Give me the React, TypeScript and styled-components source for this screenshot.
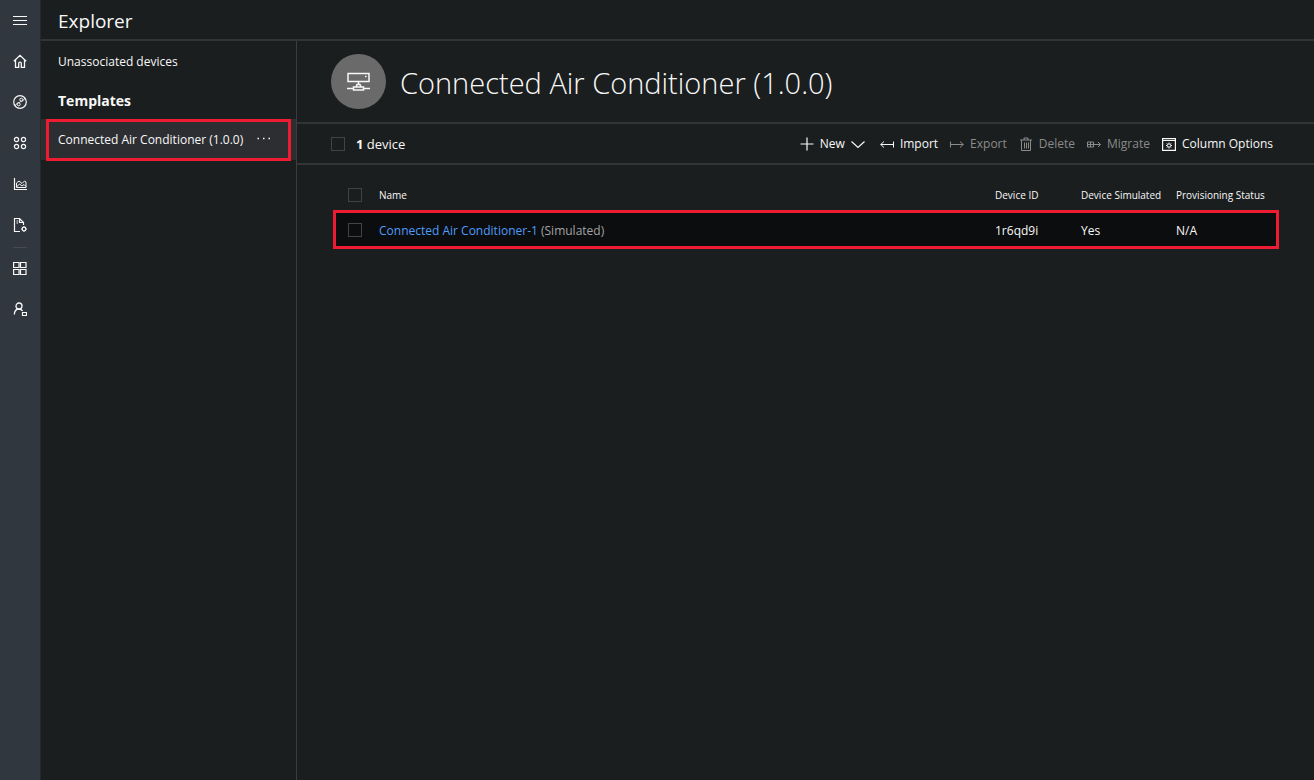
import React from "react";
import styled, { createGlobalStyle, css } from "styled-components";

const color = {
  page: "#1b1e1f",
  rail: "#31373f",
  railEdge: "#25292e",
  line: "#323435",
  selected: "#2d2e32",
  row: "#0c0d0f",
  text: "#f8f8f8",
  muted: "#a3a3a3",
  disabled: "#8a8b8b",
  link: "#4f9cf9",
  mark: "#ee1c33",
};

const GlobalStyle = createGlobalStyle`
  *, *::before, *::after { box-sizing: border-box; }
  body {
    margin: 0;
    background: ${color.page};
    color: ${color.text};
    font-family: "Open Sans", "Noto Sans", sans-serif;
    font-size: 12px;
    line-height: 20px;
  }
  button { font: inherit; color: inherit; background: none; border: 0; padding: 0; }
`;

const Shell = styled.div`
  display: flex;
  min-height: 100vh;
`;

const Rail = styled.nav`
  flex: none;
  width: 41px;
  display: flex;
  flex-direction: column;
  background: ${color.rail};
  border-right: 1px solid ${color.railEdge};
`;

const RailButton = styled.button`
  height: 41px;
  padding-bottom: 1px;
  display: flex;
  align-items: center;
  justify-content: center;
`;

const RailDivider = styled.hr`
  width: 14px;
  height: 1px;
  margin: 1px auto 0;
  border: 0;
  background: #464b52;
`;

const Content = styled.div`
  flex: 1;
  min-width: 0;
  display: flex;
  flex-direction: column;
`;

const TopBar = styled.header`
  height: 41px;
  padding: 2px 17px 0;
  display: flex;
  align-items: center;
  border-bottom: 2px solid ${color.line};
`;

const AppTitle = styled.h1`
  margin: 0;
  font-size: 19px;
  line-height: 28px;
  font-weight: 400;
`;

const Columns = styled.div`
  flex: 1;
  display: flex;
`;

const Panel = styled.aside`
  flex: none;
  width: 256px;
  border-right: 1px solid #3b3d3e;
`;

const PanelLink = styled.a`
  height: 41px;
  padding: 0 0 0 17px;
  display: flex;
  align-items: center;
  color: inherit;
  text-decoration: none;
  white-space: nowrap;
`;

const PanelHeading = styled.h2`
  height: 37px;
  margin: 0;
  padding: 0 17px;
  display: flex;
  align-items: center;
  font-size: 14px;
  font-weight: 700;
`;

const SelectedTemplate = styled.div`
  position: relative;
  height: 41px;
  padding-right: 25px;
  display: flex;
  align-items: center;
  justify-content: space-between;
  background: ${color.selected};
`;

const Mark = styled.span<{ $kind: "item" | "row" }>`
  position: absolute;
  border: 3px solid ${color.mark};
  pointer-events: none;
  ${(p) =>
    p.$kind === "item"
      ? css`inset: 0 5px -1px;`
      : css`inset: 0;`}
`;

const Main = styled.main`
  flex: 1;
  min-width: 0;
`;

const Hero = styled.section`
  height: 83px;
  padding: 0 34px;
  display: flex;
  align-items: center;
  gap: 14px;
  border-bottom: 2px solid ${color.line};
`;

const Avatar = styled.div`
  flex: none;
  width: 55px;
  height: 55px;
  border-radius: 50%;
  display: grid;
  place-items: center;
  background: #6a6a6a;
`;

const HeroTitle = styled.h2`
  margin: 0;
  padding-top: 2px;
  font-size: 29px;
  line-height: 40px;
  font-weight: 300;
`;

const Toolbar = styled.section`
  height: 41px;
  padding: 0 41px 0 34px;
  display: flex;
  align-items: center;
  justify-content: space-between;
  border-bottom: 2px solid ${color.line};
`;

const Count = styled.label`
  display: flex;
  align-items: center;
  gap: 11px;
  font-size: 13px;
`;

const Check = styled.input`
  appearance: none;
  display: block;
  flex: none;
  width: 14px;
  height: 14px;
  margin: 0;
  border: 1px solid #414344;
  background: transparent;
`;

const Actions = styled.div`
  display: flex;
  gap: 12px;
`;

const Action = styled.button<{ $menu?: boolean }>`
  display: flex;
  align-items: center;
  gap: 6px;
  padding-right: ${(p) => (p.$menu ? "3px" : "0")};
  &:disabled { color: ${color.disabled}; }
`;

const TableWrap = styled.div`
  margin: 15px 35px 0 36px;
`;

const Table = styled.table`
  width: 100%;
  table-layout: fixed;
  border-collapse: collapse;
  text-align: left;
`;

const Head = styled.th<{ $width?: number }>`
  width: ${(p) => (p.$width ? `${p.$width}px` : "auto")};
  height: 30px;
  padding: 0;
  font-size: 10px;
  font-weight: 400;
  white-space: nowrap;
`;

const BoxHead = styled(Head)`
  padding-left: 15px;
`;

const Row = styled.tr`
  position: relative;
  background: ${color.row};
`;

const Cell = styled.td`
  height: 39px;
  padding: 2px 0 0;
`;

const BoxCell = styled(Cell)`
  padding: 0 0 0 15px;
`;

const DeviceLink = styled.a`
  color: ${color.link};
  text-decoration: none;
`;

const Muted = styled.span`
  color: ${color.muted};
`;

type IconProps = { w?: number; h?: number; children: React.ReactNode };

const Icon = ({ w = 14, h = 14, children }: IconProps) => (
  <svg
    width={w}
    height={h}
    viewBox={`0 0 ${w} ${h}`}
    fill="none"
    stroke="currentColor"
    strokeWidth="1"
    aria-hidden="true"
  >
    {children}
  </svg>
);

const MenuIcon = () => (
  <Icon><path d="M0 3.5h14M0 7.5h14M0 11.5h14" /></Icon>
);

const HomeIcon = () => (
  <Icon><path strokeWidth="1.3" d="M.8 7.200 7 1.400l6.200 5.800M2.500 6v7.400h3.200V9.500a1.300 1.300 0 0 1 2.600 0v3.900h3.200V6" /></Icon>
);

const ExplorerIcon = () => (
  <Icon>
    <circle cx="7" cy="7" r="6.300" strokeWidth="1.200" />
    <circle cx="8.300" cy="4.700" r="1.500" />
    <circle cx="5.700" cy="9.300" r="1.500" />
    <path d="M2 10.500 4.300 8.300C5.500 7.200 6.500 7.800 7 7s1.800-.3 2.700-1.300L12 3.500" />
  </Icon>
);

const SetsIcon = () => (
  <Icon>
    <g strokeWidth="1.200">
      <circle cx="3.500" cy="3.500" r="2.100" />
      <circle cx="10.500" cy="3.500" r="2.100" />
      <circle cx="3.500" cy="10.500" r="2.100" />
      <circle cx="10.500" cy="10.500" r="2.100" />
    </g>
  </Icon>
);

const AnalyticsIcon = () => (
  <Icon>
    <path d="M1.500 1v11.500H14" strokeWidth="1.200" />
    <path d="M3.500 10.500V6l2.500-2 3 2.500L11.500 4l1.500 1v5.500zM3.500 10l3-3 2.500 2 2-1.500 2 2" />
  </Icon>
);

const JobsIcon = () => (
  <Icon>
    <path d="M7 13.500H1.500V.5h5l4 4V7M6.500.5v4h4M3.500 3h1.500M3.500 5h1.500" strokeWidth="1.200" />
    <circle cx="11" cy="11" r="1.800" strokeWidth="1.200" />
    <path d="M11 8v1M11 13v1M8 11h1M13 11h1M8.900 8.900l.7.7M12.400 12.400l.7.7M8.900 13.100l.7-.7M12.400 9.600l.7-.7" />
  </Icon>
);

const AppsIcon = () => (
  <Icon><path strokeWidth="1.200" d="M.6 1.500h5.400v5H.6zM7.500 1.500h5.500v5H7.500zM.6 8.500h5.400v5H.6zM7.500 8.500h5.500v5H7.500z" /></Icon>
);

const AdminIcon = () => (
  <Icon>
    <circle cx="6" cy="4" r="3" strokeWidth="1.300" />
    <path strokeWidth="1.300" d="M1.300 12.500c.2-3.500 2-5.500 4.700-5.500 1.500 0 2.800.7 3.600 2" />
    <path d="M9.500 10.500h4v3h-4z" strokeWidth="1.200" />
  </Icon>
);

const DeviceIcon = () => (
  <Icon w={24} h={20}>
    <path strokeWidth="1.500" d="M1 1.500h21v8H1zM11.500 9.500v3.500M0 16.500h6.500M16.500 16.500H23M9 15l1-2.500h3l1 2.500M6.500 15h10v3h-10z" />
    <path strokeWidth="1.500" d="M18 4.500h1.500" />
  </Icon>
);

const NewIcon = () => (
  <Icon><path strokeWidth="1.200" d="M7 .5v13M.5 7h13" /></Icon>
);

const ChevronIcon = () => (
  <Icon><path strokeWidth="1.200" d="M.5 4.500l6.500 6 6.500-6" /></Icon>
);

const ImportIcon = () => (
  <Icon><path d="M13.500 4.500v6M.5 7.500h13M4 4.500l-3.200 3 3.200 3" /></Icon>
);

const ExportIcon = () => (
  <Icon><path d="M.5 4.500v6M.5 7.500h13M10 4.500l3.200 3-3.200 3" /></Icon>
);

const DeleteIcon = () => (
  <Icon>
    <path d="M1 3h12M5 3V1h4v2M2.500 3v10.500h9V3M5.500 5.500v6M7.500 5.500v6M9.500 5.500v6" />
  </Icon>
);

const MigrateIcon = () => (
  <Icon>
    <path d="M.5 5h6v5h-6zM3.500 5v5M.5 7.500h13M11 5l2.500 2.500L11 10" />
  </Icon>
);

const OptionsIcon = () => (
  <Icon>
    <path strokeWidth="1.200" d="M.6 1.600h12.800v11.800H.6zM.6 3.500h12.800" />
    <circle cx="7" cy="8.500" r="1.700" />
    <path d="M7 5.500v1M7 10.500v1M4 8.500h1M9 8.500h1M4.900 6.400l.8.8M8.300 9.800l.8.800M4.900 10.600l.8-.8M8.300 7.200l.8-.8" />
  </Icon>
);

const MoreIcon = () => (
  <Icon>
    <path strokeWidth="1.500" d="M.5 8.500H2M6 8.500h1.500M11.500 8.500H13" />
  </Icon>
);

const primaryNav = [
  { label: "Expand menu", Glyph: MenuIcon },
  { label: "Dashboard", Glyph: HomeIcon },
  { label: "Device explorer", Glyph: ExplorerIcon },
  { label: "Device sets", Glyph: SetsIcon },
  { label: "Analytics", Glyph: AnalyticsIcon },
  { label: "Jobs", Glyph: JobsIcon },
];

const secondaryNav = [
  { label: "Application builder", Glyph: AppsIcon },
  { label: "Administration", Glyph: AdminIcon },
];

const actions = [
  { label: "New", Glyph: NewIcon, menu: true },
  { label: "Import", Glyph: ImportIcon },
  { label: "Export", Glyph: ExportIcon, disabled: true },
  { label: "Delete", Glyph: DeleteIcon, disabled: true },
  { label: "Migrate", Glyph: MigrateIcon, disabled: true },
  { label: "Column Options", Glyph: OptionsIcon },
];

const devices = [
  { name: "Connected Air Conditioner-1", id: "1r6qd9i", simulated: true, status: "N/A" },
];

export default function App() {
  return (
    <Shell>
      <GlobalStyle />
      <Rail>
        {primaryNav.map(({ label, Glyph }) => (
          <RailButton key={label} aria-label={label}><Glyph /></RailButton>
        ))}
        <RailDivider />
        {secondaryNav.map(({ label, Glyph }) => (
          <RailButton key={label} aria-label={label}><Glyph /></RailButton>
        ))}
      </Rail>
      <Content>
        <TopBar><AppTitle>Explorer</AppTitle></TopBar>
        <Columns>
          <Panel>
            <PanelLink href="#unassociated">Unassociated devices</PanelLink>
            <PanelHeading>Templates</PanelHeading>
            <SelectedTemplate>
              <PanelLink href="#template">Connected Air Conditioner (1.0.0)</PanelLink>
              <button aria-label="More options"><MoreIcon /></button>
              <Mark $kind="item" />
            </SelectedTemplate>
          </Panel>
          <Main>
            <Hero>
              <Avatar><DeviceIcon /></Avatar>
              <HeroTitle>Connected Air Conditioner (1.0.0)</HeroTitle>
            </Hero>
            <Toolbar>
              <Count>
                <Check type="checkbox" />
                <span><b>1</b> device</span>
              </Count>
              <Actions>
                {actions.map(({ label, Glyph, disabled, menu }) => (
                  <Action key={label} disabled={disabled} $menu={menu}>
                    <Glyph />
                    {label}
                    {menu && <ChevronIcon />}
                  </Action>
                ))}
              </Actions>
            </Toolbar>
            <TableWrap>
              <Table>
                <thead>
                  <tr>
                    <BoxHead $width={46}><Check type="checkbox" aria-label="Select all devices" /></BoxHead>
                    <Head>Name</Head>
                    <Head $width={86}>Device ID</Head>
                    <Head $width={95}>Device Simulated</Head>
                    <Head $width={103}>Provisioning Status</Head>
                  </tr>
                </thead>
                <tbody>
                  {devices.map((d) => (
                    <Row key={d.id}>
                      <BoxCell>
                        <Check type="checkbox" aria-label={`Select ${d.name}`} />
                        <Mark $kind="row" />
                      </BoxCell>
                      <Cell>
                        <DeviceLink href="#device">{d.name}</DeviceLink> <Muted>(Simulated)</Muted>
                      </Cell>
                      <Cell>{d.id}</Cell>
                      <Cell>{d.simulated ? "Yes" : "No"}</Cell>
                      <Cell>{d.status}</Cell>
                    </Row>
                  ))}
                </tbody>
              </Table>
            </TableWrap>
          </Main>
        </Columns>
      </Content>
    </Shell>
  );
}
